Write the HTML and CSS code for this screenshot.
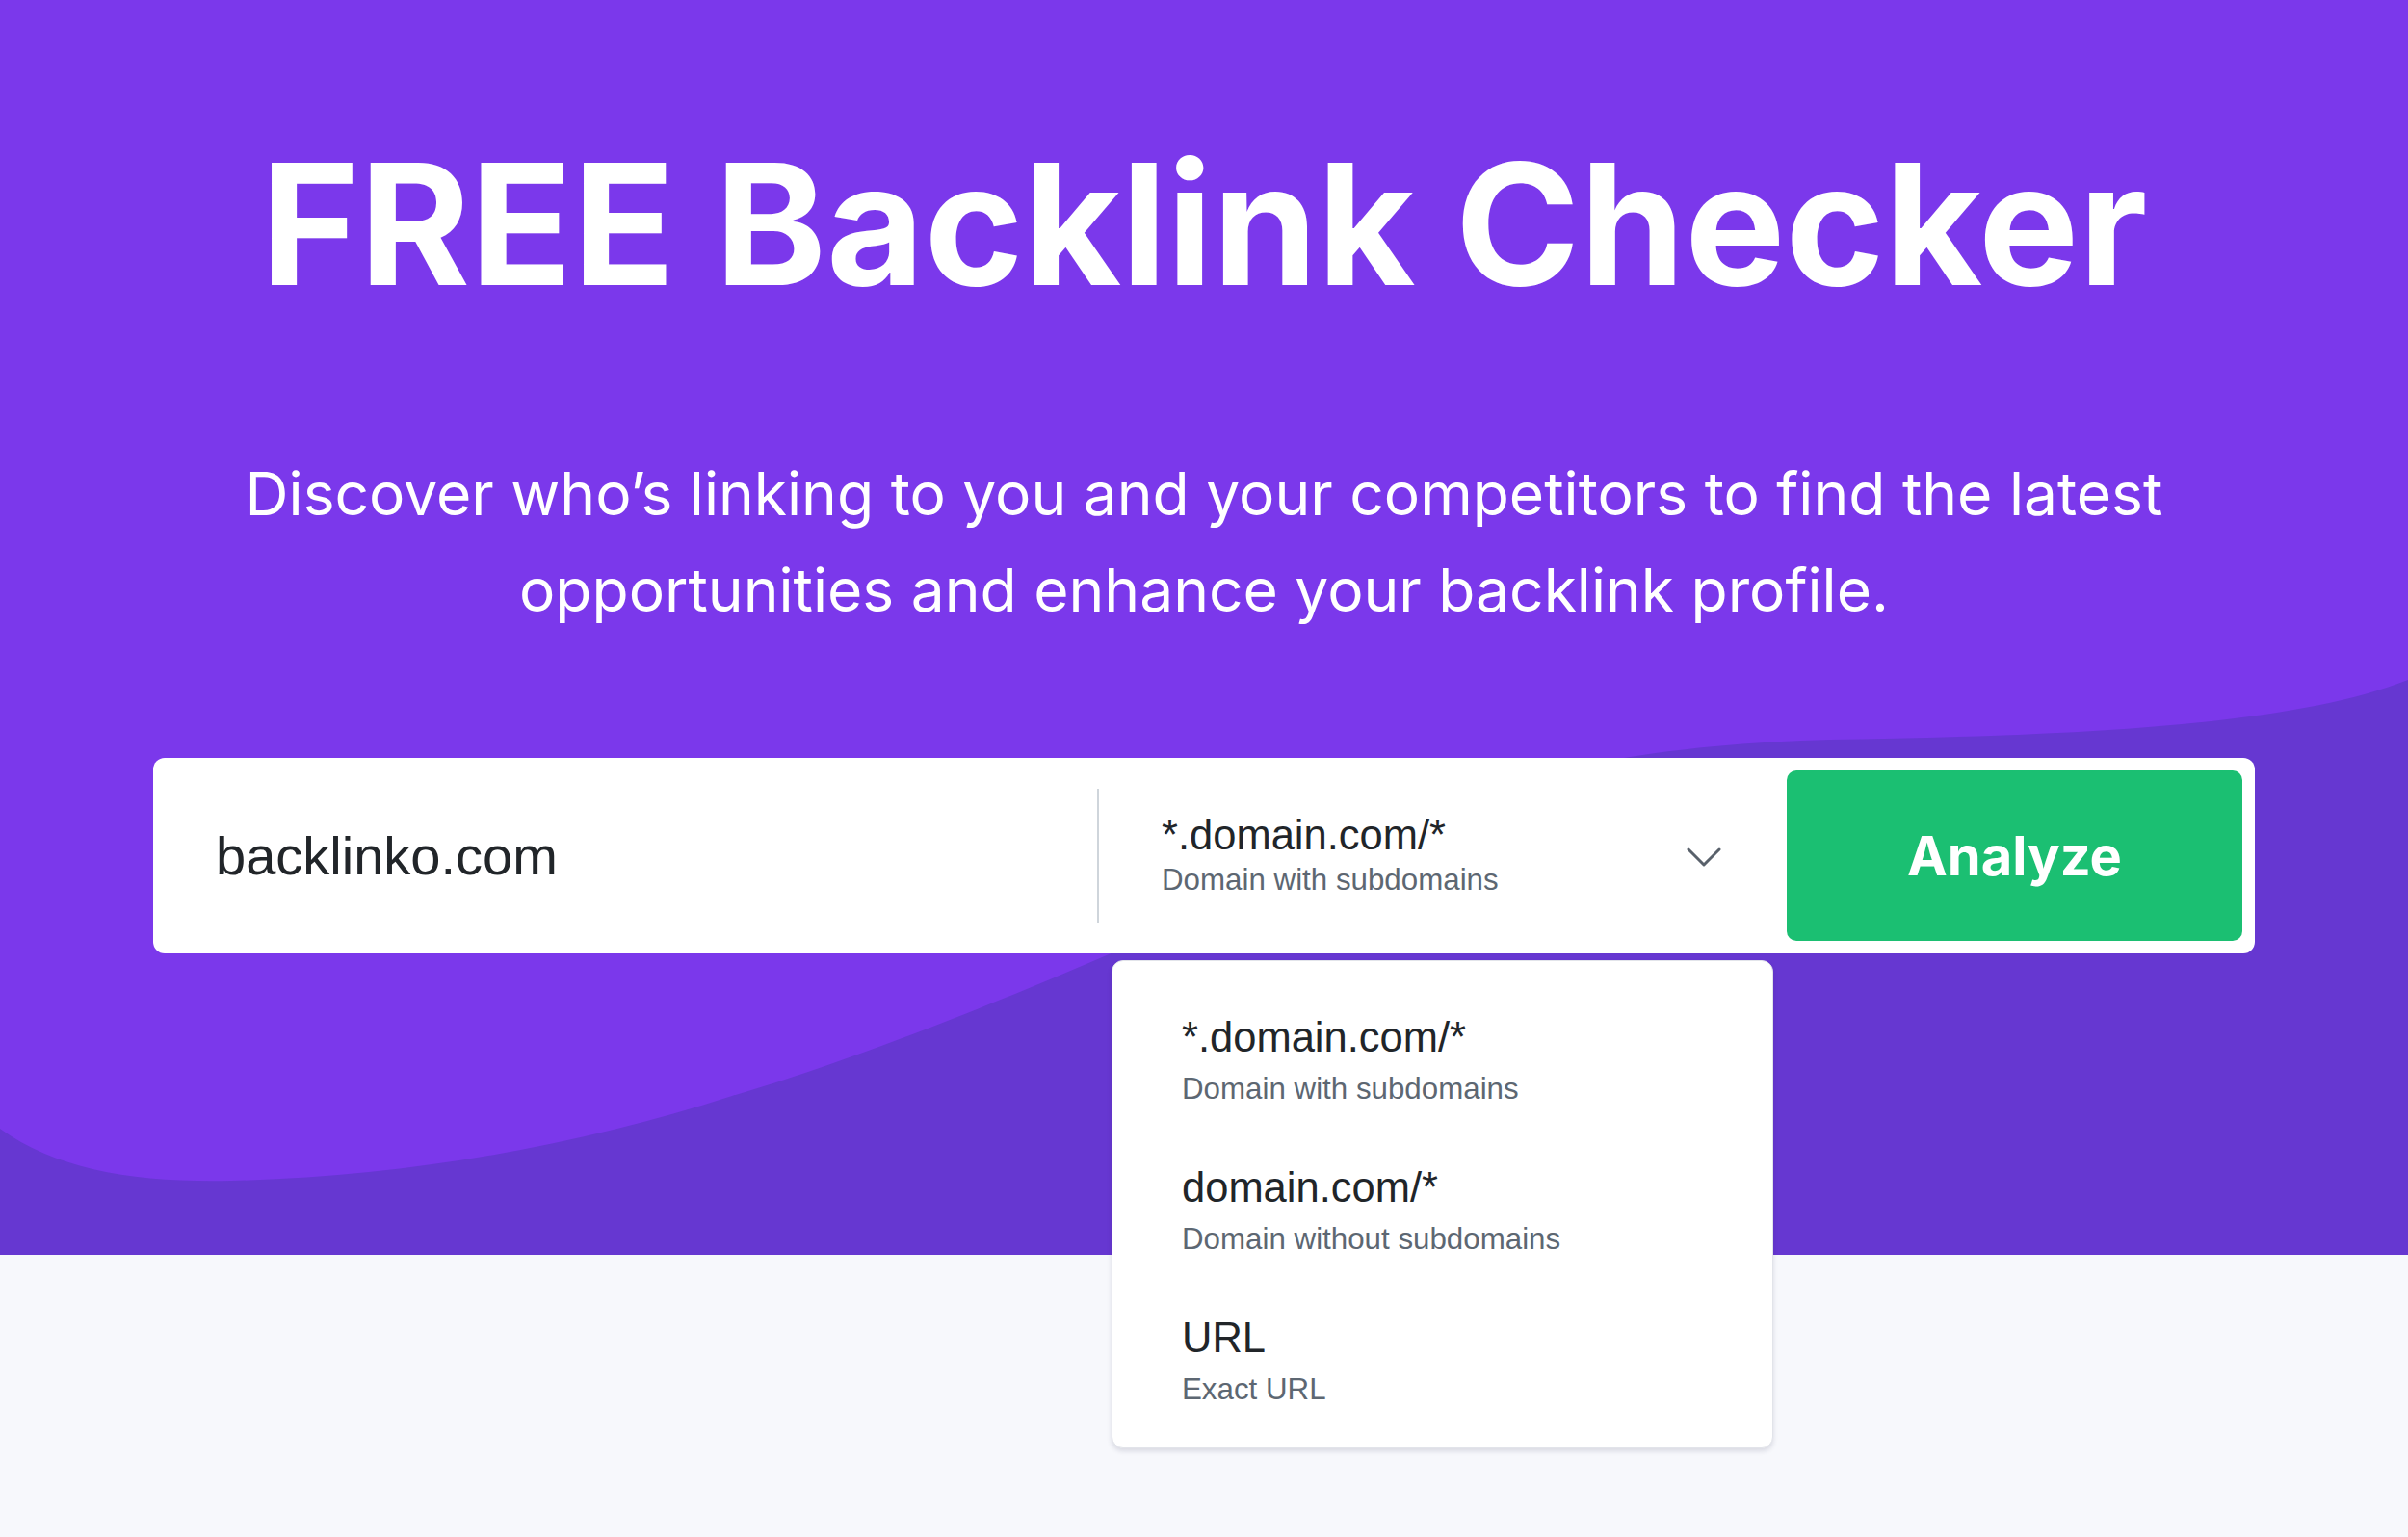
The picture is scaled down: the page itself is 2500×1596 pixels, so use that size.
FILE: index.html
```html
<!DOCTYPE html>
<html lang="en">
<head>
<meta charset="utf-8">
<title>FREE Backlink Checker</title>
<link rel="stylesheet" href="styles.css">
</head>
<body>
<section class="hero">
  <svg class="wave" viewBox="0 0 2500 1303" preserveAspectRatio="none" aria-hidden="true">
    <path d="M0,1172 C60,1215 140,1228 240,1226 C420,1222 600,1190 760,1138 C940,1085 1200,975 1440,860 C1580,793 1750,772 1900,768 C2150,764 2380,754 2500,706 L2500,1303 L0,1303 Z" fill="#6637d1"/>
  </svg>
  <h1 class="title">FREE Backlink Checker</h1>
  <p class="lead">Discover who’s linking to you and your competitors to find the latest<br>opportunities and enhance your backlink profile.</p>
  <div class="search">
    <div class="field">backlinko.com</div>
    <div class="sep"></div>
    <div class="select">
      <div class="option">
        <div class="opt-title">*.domain.com/*</div>
        <div class="opt-sub">Domain with subdomains</div>
      </div>
      <svg class="chev" width="36" height="21" viewBox="0 0 36 21" aria-hidden="true">
        <polyline points="2,2 18,18 34,2" fill="none" stroke="#59616b" stroke-width="3" stroke-linecap="round" stroke-linejoin="round"/>
      </svg>
    </div>
    <button class="analyze">Analyze</button>
    <div class="menu">
      <div class="menu-item">
        <div class="opt-title">*.domain.com/*</div>
        <div class="opt-sub">Domain with subdomains</div>
      </div>
      <div class="menu-item">
        <div class="opt-title">domain.com/*</div>
        <div class="opt-sub">Domain without subdomains</div>
      </div>
      <div class="menu-item">
        <div class="opt-title">URL</div>
        <div class="opt-sub">Exact URL</div>
      </div>
    </div>
  </div>
</section>
<section class="below"></section>
</body>
</html>
```
FILE: styles.css
```css
* { box-sizing: border-box; }
html, body { margin: 0; padding: 0; }
body {
  width: 2500px;
  height: 1596px;
  overflow: hidden;
  background: #f7f8fc;
  font-family: "Inter", "Liberation Sans", sans-serif;
}
.hero {
  position: relative;
  height: 1303px;
  background: #7b38eb;
  display: flex;
  flex-direction: column;
  align-items: center;
  padding-top: 127px;
}
.wave {
  position: absolute;
  left: 0;
  top: 0;
  width: 2500px;
  height: 1303px;
}
.title {
  position: relative;
  margin: 0;
  font-family: "Inter", sans-serif;
  font-weight: 700;
  font-size: 175px;
  line-height: 210px;
  color: #ffffff;
  letter-spacing: 0;
  white-space: nowrap;
}
.lead {
  position: relative;
  margin: 126px 0 0;
  font-family: "Inter", sans-serif;
  font-weight: 400;
  font-size: 62.3px;
  line-height: 100px;
  color: #ffffff;
  text-align: center;
  white-space: nowrap;
}
.search {
  position: relative;
  margin-top: 124px;
  width: 2182px;
  height: 203px;
  background: #ffffff;
  border-radius: 12px;
  padding: 13px;
  display: flex;
  align-items: center;
}
.field {
  width: 967px;
  padding-left: 52px;
  font-family: "Liberation Sans", Arial, sans-serif;
  font-size: 56px;
  color: #212529;
}
.sep {
  width: 2px;
  height: 139px;
  background: #cfd5db;
}
.select {
  width: 714px;
  padding: 0 68px 0 65px;
  display: flex;
  align-items: center;
  justify-content: space-between;
}
.opt-title {
  font-family: "Liberation Sans", Arial, sans-serif;
  font-size: 43.5px;
  line-height: 48px;
  color: #212529;
  white-space: nowrap;
}
.opt-sub {
  margin-top: 2px;
  font-family: "Liberation Sans", Arial, sans-serif;
  font-size: 31.3px;
  line-height: 41px;
  color: #5d6772;
  white-space: nowrap;
}
.chev { display: block; margin-top: 4px; }
.analyze {
  width: 473px;
  height: 177px;
  border: 0;
  border-radius: 10px;
  background: #1bbf72;
  color: #ffffff;
  font-family: "Inter", sans-serif;
  font-weight: 700;
  font-size: 56px;
  padding: 0;
  cursor: pointer;
}
.menu {
  position: absolute;
  left: 995px;
  top: 210px;
  width: 687px;
  height: 507px;
  background: #ffffff;
  border: 1px solid #e2e4ea;
  border-radius: 12px;
  box-shadow: 0 3px 5px rgba(40, 40, 80, 0.14);
  padding: 26px 0 12px 72px;
  z-index: 2;
}
.menu-item {
  padding: 28px 0 29px;
}
.menu-item .opt-title { line-height: 50px; }
.menu-item .opt-sub { margin-top: 9px; line-height: 40px; }
.below {
  height: 293px;
  background: #f7f8fc;
}
```
